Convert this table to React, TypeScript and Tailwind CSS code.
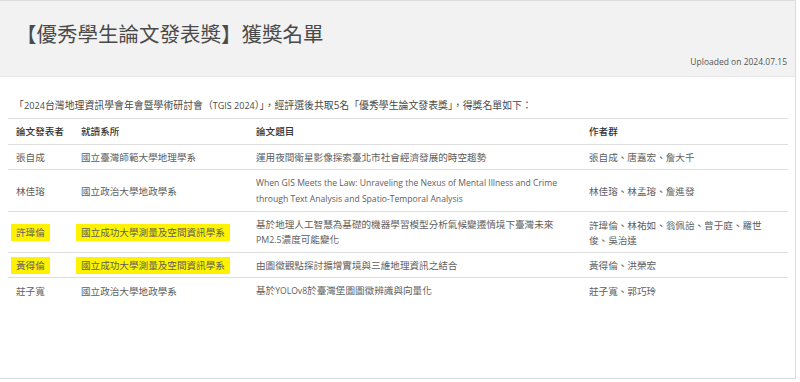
import React from 'react';

interface Row {
  presenter: string;
  dept: string;
  title: React.ReactNode;
  authors: React.ReactNode;
  marked?: boolean;
}

const rows: Row[] = [
  {
    presenter: '張自成',
    dept: '國立臺灣師範大學地理學系',
    title: '運用夜間衛星影像探索臺北市社會經濟發展的時空趨勢',
    authors: '張自成、唐嘉宏、詹大千',
  },
  {
    presenter: '林佳瑢',
    dept: '國立政治大學地政學系',
    title: (
      <span className="text-[8.6px]">
        When GIS Meets the Law: Unraveling the Nexus of Mental Illness and Crime
        <br />
        through Text Analysis and Spatio-Temporal Analysis
      </span>
    ),
    authors: '林佳瑢、林孟瑢、詹進發',
  },
  {
    presenter: '許瑋倫',
    dept: '國立成功大學測量及空間資訊學系',
    title: (
      <>
        基於地理人工智慧為基礎的機器學習模型分析氣候變遷情境下臺灣未來
        <br />
        <span className="text-[8.8px]">PM2.5</span>濃度可能變化
      </>
    ),
    authors: (
      <>
        許瑋倫、林祐如、翁佩詒、曾于庭、羅世
        <br />
        俊、吳治達
      </>
    ),
    marked: true,
  },
  {
    presenter: '黃得倫',
    dept: '國立成功大學測量及空間資訊學系',
    title: '由圖徵觀點探討擴增實境與三維地理資訊之結合',
    authors: '黃得倫、洪榮宏',
    marked: true,
  },
  {
    presenter: '莊子寬',
    dept: '國立政治大學地政學系',
    title: (
      <>
        基於<span className="text-[8.6px]">YOLOv8</span>於臺灣堡圖圖徵辨識與向量化
      </>
    ),
    authors: '莊子寬、郭巧玲',
  },
];

// highlighter marks drawn over the scan
function Marker({ children }: { children: React.ReactNode }) {
  return (
    <span className="bg-[#fff200] px-[5px] -mx-[5px] py-[2px]">
      {children}
    </span>
  );
}

export default function App() {
  return (
    <div
      className="w-[796px] h-[379px] bg-white border-t border-r border-b border-[#dcdcdc] text-[#5e5e5e]"
      style={{ fontFamily: '"Open Sans", "Noto Sans CJK TC", sans-serif' }}
    >
      {/* Header */}
      <div className="h-[76px] bg-[#f2f2f2] border-b border-[#e6e6e6] flex flex-col pl-[16px] pr-[8px]">
        <h1 className="mt-[20px] text-[20.5px] leading-[26px] text-[#4a4a4a] font-normal">
          【優秀學生論文發表獎】獲獎名單
        </h1>
        <div className="mt-[9px] self-end text-[8.5px] leading-[12px] text-[#555]">
          Uploaded on 2024.07.15
        </div>
      </div>

      {/* Body */}
      <p className="mt-[21px] pl-[14px] text-[9.9px] leading-[15px] text-[#4a4a4a]">
        「<span className="text-[9.2px]">2024</span>台灣地理資訊學會年會暨學術研討會（<span className="text-[9px]">TGIS 2024</span>）」，經評選後共取5名「優秀學生論文發表獎」，得獎名單如下：
      </p>

      <table className="mt-[5px] ml-[8px] w-[780px] border-collapse text-[9.6px] leading-[15px] table-fixed">
        <colgroup>
          <col className="w-[65px]" />
          <col className="w-[175px]" />
          <col className="w-[333px]" />
          <col className="w-[207px]" />
        </colgroup>
        <thead>
          <tr className="border-t border-b border-[#dedede] text-[#333]">
            <th className="text-left font-medium px-[8px] pt-[5px] pb-[5px]">論文發表者</th>
            <th className="text-left font-medium px-[8px] pt-[5px] pb-[5px]">就讀系所</th>
            <th className="text-left font-medium px-[8px] pt-[5px] pb-[5px]">論文題目</th>
            <th className="text-left font-medium px-[8px] pt-[5px] pb-[5px]">作者群</th>
          </tr>
        </thead>
        <tbody>
          {rows.map((r, i) => (
            <tr
              key={r.presenter}
              className={i < rows.length - 1 ? 'border-b border-[#dedede]' : ''}
            >
              <td className="px-[8px] pt-[5px] pb-[4px] align-middle whitespace-nowrap">
                {r.marked ? <Marker>{r.presenter}</Marker> : r.presenter}
              </td>
              <td className="px-[8px] pt-[5px] pb-[4px] align-middle whitespace-nowrap">
                {r.marked ? <Marker>{r.dept}</Marker> : r.dept}
              </td>
              <td className="px-[8px] pt-[5px] pb-[4px] align-middle whitespace-nowrap">
                {r.title}
              </td>
              <td className="px-[8px] pt-[5px] pb-[4px] align-middle whitespace-nowrap">
                {r.authors}
              </td>
            </tr>
          ))}
        </tbody>
      </table>
    </div>
  );
}
